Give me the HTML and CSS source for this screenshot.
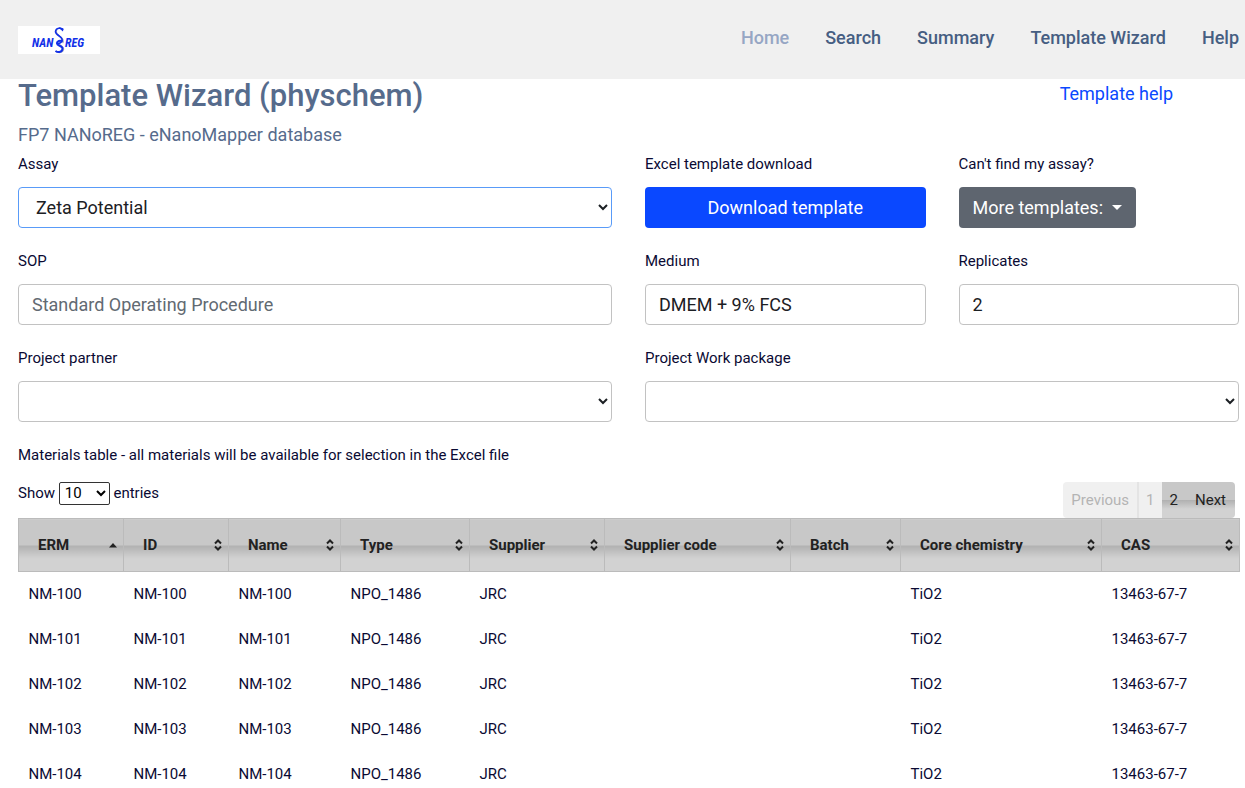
FILE: index.html
```html
<!DOCTYPE html>
<html lang="en">
<head>
<meta charset="utf-8">
<title>Template Wizard (physchem)</title>
<link rel="stylesheet" href="styles.css">
</head>
<body>
<svg class="defs" aria-hidden="true">
  <symbol id="sort-both" viewBox="0 0 10 12"><path d="M2 4.5 5 1.5 8 4.5M2 7.5 5 10.5 8 7.5" fill="none" stroke="#222" stroke-width="2"/></symbol>
  <symbol id="sort-asc" viewBox="0 0 10 12"><path d="M1 8.5 5 4 9 8.5z" fill="#222"/></symbol>
</svg>
<header class="topbar">
  <a class="brand" href="#" aria-label="NANoREG">
    <svg class="logo" viewBox="0 0 82 28" role="img" aria-hidden="true">
      <rect width="82" height="28" fill="#fff"/>
      <text class="logo-text" x="14" y="21">NAN</text>
      <text class="logo-text" x="47" y="21">REG</text>
      <path d="M39 3C37 6 39 8.500 42 10.500 45 12.500 46 15 44.500 17M40 17c0 2 6 3 5.500 6.500-.500 3-5 4-8 1.500" fill="none" stroke="#b4b4bc" stroke-width="1.500"/>
      <path d="M45 4C43 1 38 2 37.500 5.500 37.500 9 43 10 44 13c1 4-4.500 5.500-5.500 3.500" fill="none" stroke="#1230e8" stroke-width="1.600"/>
      <path d="M44.500 15.500C42 14 39 15 39 17.500c0 2.500 5.500 2 5.500 5 0 3.500-4 4.500-7 2.500" fill="none" stroke="#1230e8" stroke-width="2"/>
      <path d="M41 1l4.500 1.500L45 5.500l-3-2.500z" fill="#1230e8"/>
    </svg>
  </a>
  <nav class="menu">
    <a class="active" href="#">Home</a>
    <a href="#">Search</a>
    <a href="#">Summary</a>
    <a href="#">Template Wizard</a>
    <a href="#">Help</a>
  </nav>
</header>
<main class="page">
  <div class="heading">
    <div>
      <h1>Template Wizard (physchem)</h1>
      <h2>FP7 NANoREG - eNanoMapper database</h2>
    </div>
    <a class="help" href="#">Template help</a>
  </div>
  <form class="form">
    <div class="field wide">
      <label for="assay">Assay</label>
      <select id="assay" class="control focused"><option>Zeta Potential</option></select>
    </div>
    <div class="field">
      <label for="download">Excel template download</label>
      <button id="download" class="btn primary" type="button">Download template</button>
    </div>
    <div class="field">
      <label for="more">Can't find my assay?</label>
      <button id="more" class="btn secondary" type="button">More templates:<span class="caret"></span></button>
    </div>
    <div class="field wide">
      <label for="sop">SOP</label>
      <input id="sop" class="control" type="text" placeholder="Standard Operating Procedure">
    </div>
    <div class="field">
      <label for="medium">Medium</label>
      <input id="medium" class="control" type="text" value="DMEM + 9% FCS">
    </div>
    <div class="field">
      <label for="replicates">Replicates</label>
      <input id="replicates" class="control" type="text" value="2">
    </div>
    <div class="field wide">
      <label for="partner">Project partner</label>
      <select id="partner" class="control"><option></option></select>
    </div>
    <div class="field wide">
      <label for="package">Project Work package</label>
      <select id="package" class="control"><option></option></select>
    </div>
  </form>
  <p class="caption">Materials table - all materials will be available for selection in the Excel file</p>
  <div class="tools">
    <label class="length">Show <select><option>10</option></select> entries</label>
    <div class="pager">
      <button type="button" disabled>Previous</button>
      <button type="button" disabled>1</button>
      <button type="button">2</button>
      <button type="button">Next</button>
    </div>
  </div>
  <table class="materials">
    <colgroup><col class="c-erm"><col class="c-id"><col class="c-name"><col class="c-type"><col class="c-supplier"><col class="c-code"><col class="c-batch"><col class="c-core"><col class="c-cas"></colgroup>
    <thead>
      <tr>
        <th><div>ERM<svg><use href="#sort-asc"/></svg></div></th>
        <th><div>ID<svg><use href="#sort-both"/></svg></div></th>
        <th><div>Name<svg><use href="#sort-both"/></svg></div></th>
        <th><div>Type<svg><use href="#sort-both"/></svg></div></th>
        <th><div>Supplier<svg><use href="#sort-both"/></svg></div></th>
        <th><div>Supplier code<svg><use href="#sort-both"/></svg></div></th>
        <th><div>Batch<svg><use href="#sort-both"/></svg></div></th>
        <th><div>Core chemistry<svg><use href="#sort-both"/></svg></div></th>
        <th><div>CAS<svg><use href="#sort-both"/></svg></div></th>
      </tr>
    </thead>
    <tbody>
      <tr><td>NM-100</td><td>NM-100</td><td>NM-100</td><td>NPO_1486</td><td>JRC</td><td></td><td></td><td>TiO2</td><td>13463-67-7</td></tr>
      <tr><td>NM-101</td><td>NM-101</td><td>NM-101</td><td>NPO_1486</td><td>JRC</td><td></td><td></td><td>TiO2</td><td>13463-67-7</td></tr>
      <tr><td>NM-102</td><td>NM-102</td><td>NM-102</td><td>NPO_1486</td><td>JRC</td><td></td><td></td><td>TiO2</td><td>13463-67-7</td></tr>
      <tr><td>NM-103</td><td>NM-103</td><td>NM-103</td><td>NPO_1486</td><td>JRC</td><td></td><td></td><td>TiO2</td><td>13463-67-7</td></tr>
      <tr><td>NM-104</td><td>NM-104</td><td>NM-104</td><td>NPO_1486</td><td>JRC</td><td></td><td></td><td>TiO2</td><td>13463-67-7</td></tr>
    </tbody>
  </table>
</main>
</body>
</html>
```
FILE: styles.css
```css
* { box-sizing: border-box; }
body {
  margin: 0;
  height: 100vh;
  overflow: hidden;
  background: #fff;
  color: #0a0a33;
  font: 15px/24px Roboto, sans-serif;
}
.defs { display: none; }
a { text-decoration: none; }
.topbar {
  display: flex;
  justify-content: space-between;
  align-items: center;
  padding: 26px 6px 25px 18px;
  background: #f0f0f0;
}
.brand, .logo { display: block; }
.logo { width: 82px; height: 28px; }
.logo-text {
  font: italic bold 12px "Liberation Sans Narrow", "Roboto Condensed", Roboto, sans-serif;
  fill: #1230e8;
}
.menu { display: flex; gap: 36px; padding-bottom: 4px; }
.menu a { color: #465e82; font-size: 18px; font-weight: 500; line-height: 24px; }
.menu .active { color: #96a6c4; }
.page { padding: 0 6px 0 18px; }
.heading {
  display: flex;
  justify-content: space-between;
  align-items: flex-start;
  padding-bottom: 5px;
}
h1 { margin: 0 0 10px; color: #566b8c; font-size: 31px; font-weight: 500; line-height: 34px; }
h2 { margin: 0; color: #566b8c; font-size: 18px; font-weight: 400; line-height: 24px; }
.help { padding: 3px 66px 0 0; color: #0a48ff; font-size: 18px; }
.form { display: grid; grid-template-columns: repeat(4, 1fr); gap: 21px 33px; }
.field { display: flex; flex-direction: column; align-items: flex-start; gap: 11px; }
.wide { grid-column: span 2; }
.control, .btn { width: 100%; height: 41px; border-radius: 4px; font: 18px/24px Roboto, sans-serif; }
.control { padding: 0 13px; border: 1px solid #c2c2c2; background: #fff; color: #1c2024; outline: 0; }
.control::placeholder { color: #626a72; opacity: 1; }
.focused { border-color: #599bf8; }
.btn { border: 0; color: #fff; }
.primary { background: #0a48ff; }
.secondary { display: flex; align-items: center; gap: 9px; width: auto; padding: 0 14px; background: #5e656f; }
.caret { border: 5px solid transparent; border-top-color: #fff; border-bottom: 0; }
.caption { margin: 21px 0 15px; }
.tools { display: flex; justify-content: space-between; padding-right: 4px; }
.length { margin-top: -1px; }
.length select {
  width: 51px;
  height: 23px;
  padding: 0 1px;
  border: 1px solid #333;
  border-radius: 2px;
  background: #fff;
  color: #000;
  font: 15px Roboto, sans-serif;
}
.pager { display: flex; border-radius: 4px; overflow: hidden; }
.pager button, .materials th { background: linear-gradient(#c8c8c8 50%, #b0b0b0 50%, #d2d2d2 75%); }
.pager button { height: 36px; padding: 0 8px; border: 0; color: #222; font: 15px Roboto, sans-serif; }
.pager button:disabled { background: #f0f0f0; color: #b4b4b4; }
.pager button:first-child { border-right: 2px solid #e4e4e4; }
.pager button:nth-child(2) { padding: 0 7px; }
.pager button:last-child { padding: 0 9px; }
.materials { width: 100%; table-layout: fixed; border-collapse: collapse; }
.materials th { height: 53px; padding: 0 5px 0 19px; border: 1px solid #bbb; color: #222; font-weight: 700; text-align: left; }
.materials th div { display: flex; align-items: center; justify-content: space-between; white-space: nowrap; }
.materials th svg { width: 10px; height: 12px; }
.materials td { height: 45px; padding: 0 10px; }
.c-erm, .c-id { width: 105px; }
.c-name { width: 112px; }
.c-type { width: 129px; }
.c-supplier { width: 135px; }
.c-code { width: 186px; }
.c-batch { width: 110px; }
.c-core { width: 201px; }
.c-cas { width: 138px; }
```
